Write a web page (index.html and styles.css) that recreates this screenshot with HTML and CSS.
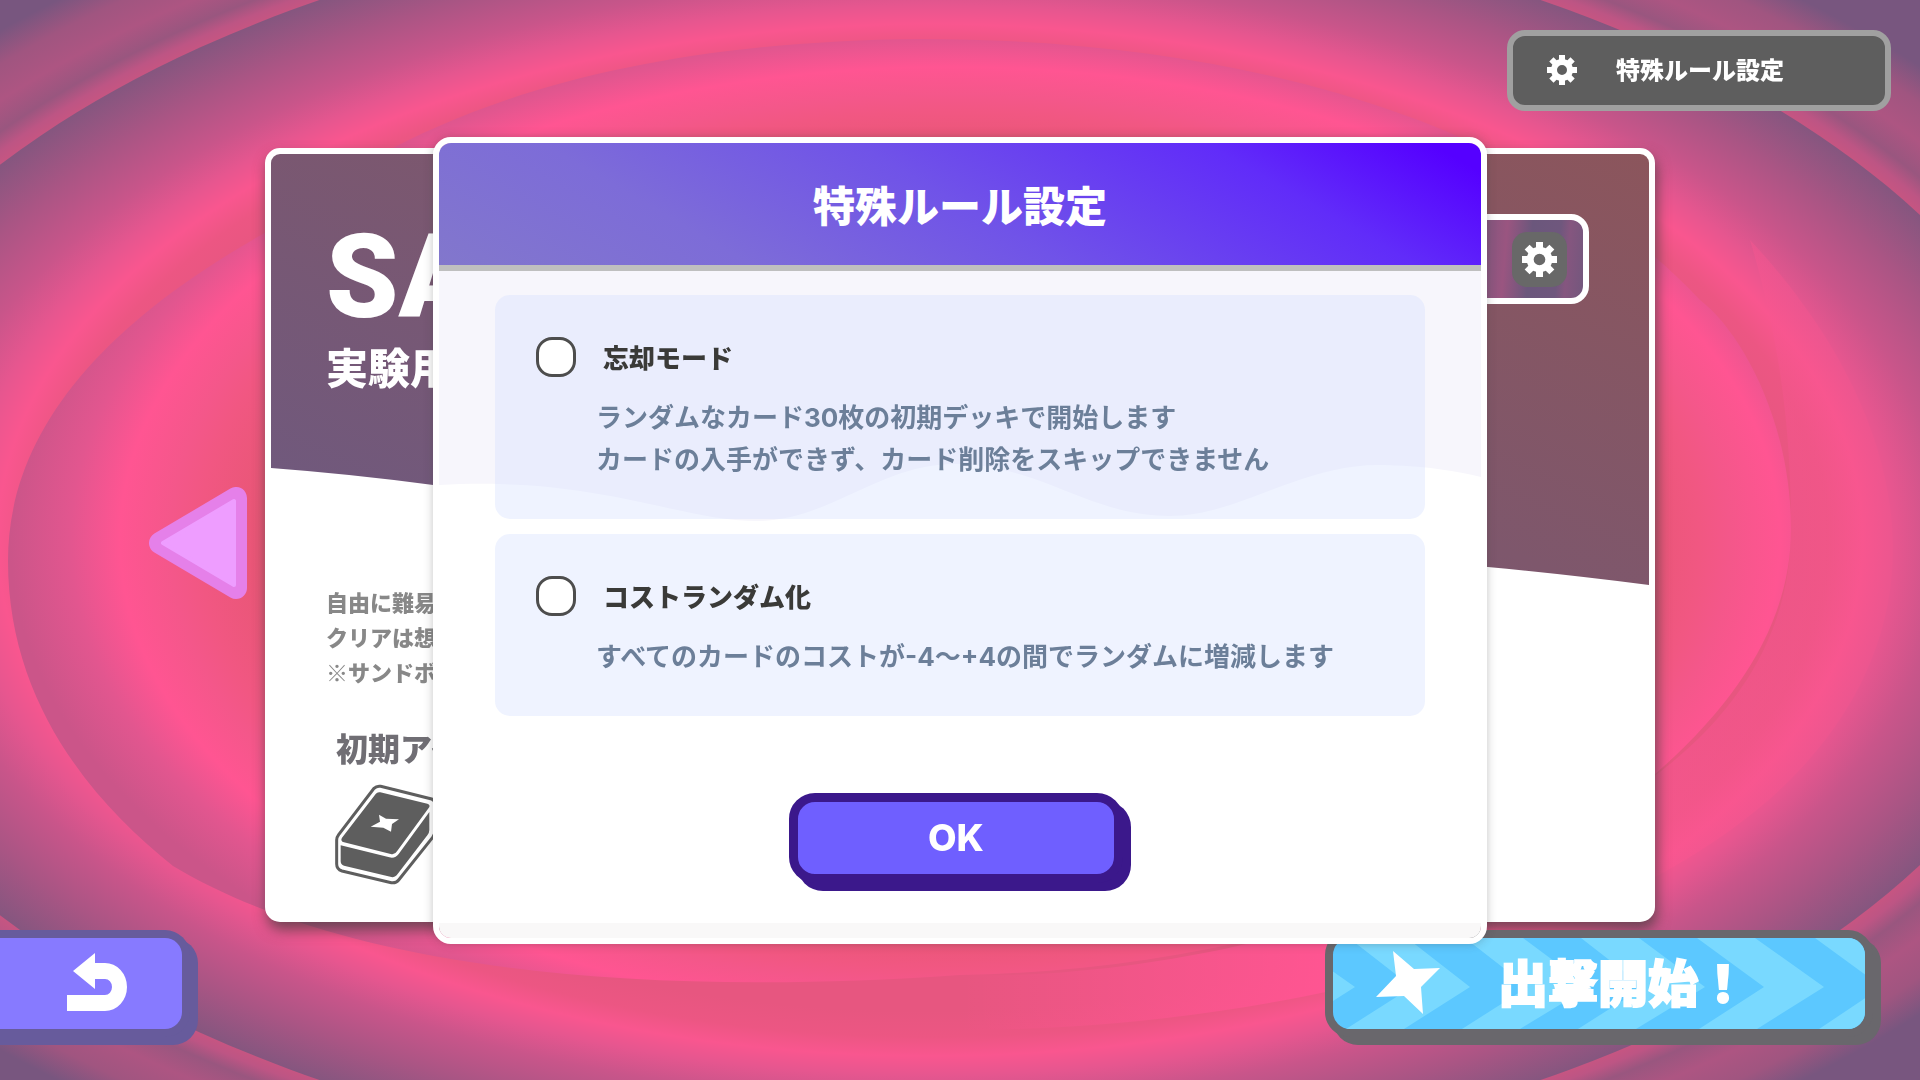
FILE: index.html
```html
<!DOCTYPE html>
<html lang="ja">
<head>
    <meta charset="UTF-8">
    <meta name="viewport" content="width=device-width, initial-scale=1.0">
    <title>特殊ルール設定</title>
    <link rel="stylesheet" href="styles.css">
</head>
<body>
    <!-- shared icons -->
    <svg class="defs" width="0" height="0" aria-hidden="true">
        <symbol id="gear" viewBox="-15 -15 30 30">
            <circle r="8" fill="none" stroke="currentColor" stroke-width="6"/>
            <g fill="currentColor">
                <path d="M-3-15H3V-9H-3ZM-3 9H3V15H-3ZM-15-3H-9V3H-15ZM9-3H15V3H9Z"/>
                <path transform="rotate(45)" d="M-3-15H3V-9H-3ZM-3 9H3V15H-3ZM-15-3H-9V3H-15ZM9-3H15V3H9Z"/>
            </g>
        </symbol>
    </svg>

    <svg class="swirl" viewBox="0 0 1920 1080" preserveAspectRatio="none" aria-hidden="true">
        <defs>
            <radialGradient id="outer" gradientUnits="userSpaceOnUse" cx="0" cy="0" r="1" gradientTransform="translate(930 540) scale(1439 796)">
                <stop offset=".79" stop-color="#cf557f"/>
                <stop offset=".81" stop-color="#bd5584"/>
                <stop offset=".825" stop-color="#99567f"/>
                <stop offset=".85" stop-color="#ad5582"/>
                <stop offset=".88" stop-color="#a05580"/>
                <stop offset=".91" stop-color="#78567f"/>
            </radialGradient>
            <radialGradient id="middle" gradientUnits="userSpaceOnUse" cx="0" cy="0" r="1" gradientTransform="translate(930 540) scale(1151 637)">
                <stop offset=".74" stop-color="#e75680"/>
                <stop offset=".78" stop-color="#ec5683"/>
                <stop offset=".81" stop-color="#f9568f"/>
                <stop offset=".84" stop-color="#e6568f"/>
                <stop offset=".88" stop-color="#c9558a"/>
                <stop offset=".94" stop-color="#a95584"/>
                <stop offset="1" stop-color="#85567f"/>
            </radialGradient>
            <radialGradient id="inner" gradientUnits="userSpaceOnUse" cx="0" cy="0" r="1" gradientTransform="translate(950 540) scale(1000 570)">
                <stop offset=".68" stop-color="#e75674"/>
                <stop offset=".75" stop-color="#f15782"/>
                <stop offset=".78" stop-color="#f4578a"/>
                <stop offset=".83" stop-color="#ff5592"/>
                <stop offset=".88" stop-color="#e2568f"/>
                <stop offset=".94" stop-color="#cb5589"/>
            </radialGradient>
            <linearGradient id="glow" x1="0" y1="0" x2="1" y2="0">
                <stop offset="0" stop-color="#ff5592" stop-opacity="0"/>
                <stop offset=".4" stop-color="#ff5592"/>
                <stop offset="1" stop-color="#f4568f" stop-opacity=".3"/>
            </linearGradient>
        </defs>
        <rect width="1920" height="1080" fill="url(#outer)"/>
        <ellipse cx="930" cy="540" rx="1151" ry="637" fill="url(#middle)"/>
        <path d="M1791 529C1791 640 1730 730 1620 800C1400 925 1150 980 960 975L960 1030C1300 1030 1640 930 1790 780C1960 610 1900 400 1750 240C1780 340 1791 430 1791 529Z" fill="url(#glow)"/>
        <path d="M8 561C8 700 90 800 173 866C330 960 600 1000 960 975C1240 970 1480 885 1654 775C1740 700 1791 620 1791 529C1791 420 1740 330 1700 300C1540 130 1260 39 920 39C600 42 400 120 270 230C90 330 8 440 8 561Z" fill="url(#inner)"/>
    </svg>

    <main class="scene">
        <header class="topbar">
            <button class="rule-button" type="button">
                <svg width="30" height="30" aria-hidden="true"><use href="#gear"/></svg>
                <span>特殊ルール設定</span>
            </button>
        </header>

        <section class="stage">
            <button class="prev" type="button" aria-label="前へ">
                <svg viewBox="0 0 98 112" width="98" height="112" aria-hidden="true">
                    <path d="M11 56L87 11V101Z" fill="#e580e9" stroke="#e580e9" stroke-width="22" stroke-linejoin="round"/>
                    <path d="M14 56L85 14V98Z" fill="#ee9dff" stroke="#ee9dff" stroke-width="4" stroke-linejoin="round"/>
                </svg>
            </button>
            <article class="card">
                <svg class="card-wave" viewBox="0 0 1376 431" preserveAspectRatio="none" aria-hidden="true">
                    <defs>
                        <linearGradient id="dusk" gradientUnits="userSpaceOnUse" x1="1000" y1="-220" x2="620" y2="640">
                            <stop offset="0" stop-color="#8d555a"/>
                            <stop offset="1" stop-color="#6f597e"/>
                        </linearGradient>
                    </defs>
                    <path d="M0 0H1376V431Q1290 420 1215 413C800 380 600 340 162 331Q80 320 0 314Z" fill="url(#dusk)"/>
                </svg>
                <div class="card-head">
                    <div>
                        <h1>SA</h1>
                        <p class="tagline">実験用</p>
                    </div>
                    <div class="slot">
                        <button class="slot-button" type="button" aria-label="設定">
                            <svg width="35" height="35" aria-hidden="true"><use href="#gear"/></svg>
                        </button>
                    </div>
                </div>
                <p class="card-text">自由に難易<br>クリアは想<br>※サンドボ</p>
                <h2>初期アイ</h2>
                <svg class="deck" viewBox="255 672 306 303" width="102" height="101" aria-hidden="true">
                    <path d="M372 685Q380 677 392 679L545 717Q556 721 556 732V810Q556 822 548 832L446 960Q438 970 424 968L276 933Q260 928 260 912V840Q260 832 266 824Z" fill="#fff" stroke="#5e5e5e" stroke-width="9"/>
                    <path d="M377 702Q382 695 391 697L532 731Q543 735 536 744L441 874Q435 885 422 882L282 847Q270 843 276 833Z" fill="#5e5e5e"/>
                    <path d="M272 856L418 892Q436 896 446 882L538 756V810Q538 818 532 826L440 946Q434 953 424 951L282 917Q272 914 272 904Z" fill="#5e5e5e"/>
                    <path d="M362 800L390 785L387 764L408 776L447 778L426 792L423 815L400 803Z" fill="#fff"/>
                </svg>
            </article>
        </section>

        <footer class="bottombar">
            <button class="back" type="button" aria-label="戻る">
                <svg viewBox="0 0 60 58" width="60" height="58" aria-hidden="true">
                    <path d="M6 18L28 0V10H38A22 24 0 0 1 38 58H0V42H38A7 8 0 0 0 38 26H28V36Z" fill="#fff"/>
                </svg>
            </button>
            <button class="start" type="button">
                <svg class="chevrons" viewBox="0 0 532 91" preserveAspectRatio="xMidYMid slice" aria-hidden="true">
                    <g fill="#79d9ff">
                        <path d="M-105 0h58L22 49L-44 91h-58L-36 49Z"/>
                        <path d="M16 0h58L137 49L71 91h-58L79 49Z"/>
                        <path d="M132 0h58L256 49L187 91h-58L195 49Z"/>
                        <path d="M248 0h58L372 49L303 91h-58L311 49Z"/>
                        <path d="M364 0h58L491 49L424 91h-58L431 49Z"/>
                        <path d="M482 0h58V91h-54L549 49Z"/>
                    </g>
                </svg>
                <svg class="star" viewBox="76 54 64 63" width="64" height="63" aria-hidden="true">
                    <path d="M93 54L114 72L140 71L121 90L123 117L104 99L76 100L96 79Z" fill="#fff"/>
                </svg>
                <span>出撃開始！</span>
            </button>
        </footer>
    </main>

    <div class="overlay">
        <form class="modal" role="dialog" aria-labelledby="modalTitle">
            <h2 class="modal-title" id="modalTitle">特殊ルール設定</h2>
            <div class="modal-body">
                <svg class="modal-wave" viewBox="0 0 1042 252" preserveAspectRatio="none" aria-hidden="true">
                    <path d="M0 0H1042V206C1010 198 970 194 939 194C860 194 800 245 730 245C650 245 600 193 516 193C440 193 390 250 318 250C240 250 160 205 0 214Z" fill="#f7f6fc"/>
                </svg>
                <div class="option">
                    <div class="option-head">
                        <input type="checkbox" id="forget">
                        <label for="forget">忘却モード</label>
                    </div>
                    <p>ランダムなカード30枚の初期デッキで開始します<br>カードの入手ができず、カード削除をスキップできません</p>
                </div>
                <div class="option">
                    <div class="option-head">
                        <input type="checkbox" id="randomCost">
                        <label for="randomCost">コストランダム化</label>
                    </div>
                    <p>すべてのカードのコストが-4〜+4の間でランダムに増減します</p>
                </div>
                <button class="ok" type="button">OK</button>
            </div>
        </form>
    </div>
</body>
</html>
```
FILE: styles.css
```css
* {
    box-sizing: border-box;
}

body {
    margin: 0;
    font-family: "Noto Sans CJK JP", sans-serif;
    font-weight: 900;
    color: #ffffff;
    background-color: #78567f;
}

h1, h2, p {
    margin: 0;
}

button {
    font: inherit;
    color: inherit;
    padding: 0;
    border: none;
    background: none;
    cursor: pointer;
}

svg {
    display: block;
}

.defs {
    position: absolute;
}

.swirl {
    position: fixed;
    top: 0;
    left: 0;
    width: 100%;
    height: 100%;
}

.scene {
    position: relative;
    min-height: 100vh;
    display: grid;
    grid-template-rows: auto 1fr auto;
    padding: 30px 0 43px;
}

/* Top bar */
.topbar {
    display: flex;
    justify-content: flex-end;
    padding-right: 29px;
    margin-bottom: 37px;
}

.rule-button {
    display: flex;
    align-items: center;
    gap: 39px;
    width: 384px;
    height: 81px;
    padding: 0 0 1px 34px;
    font-size: 24px;
    line-height: 36px;
    background-color: #5e5e5e;
    border: 6px solid #a0a0a0;
    border-radius: 18px;
}

.rule-button span {
    padding-bottom: 2px;
}

/* Stage card */
.stage {
    display: grid;
    grid-template-columns: 1fr 72.4% 1fr;
    margin-bottom: 8px;
}

.prev {
    align-self: center;
    justify-self: end;
    margin: 16px 18px 0 0;
}

.card {
    position: relative;
    padding: 60px 60px 30px 55px;
    background-color: #ffffff;
    border: 6px solid #ffffff;
    border-radius: 15px;
    box-shadow: 2px 8px 14px rgba(60, 60, 60, 0.7);
}

.card-wave {
    position: absolute;
    top: 0;
    left: 0;
    width: 100%;
    height: 431px;
    border-radius: 9px 9px 0 0;
}

.card-head {
    position: relative;
    display: flex;
    justify-content: space-between;
    align-items: flex-start;
}

h1 {
    margin-top: 15px;
    font-family: Roboto, sans-serif;
    font-size: 116px;
    font-weight: 900;
    line-height: 96px;
}

.tagline {
    margin-top: 13px;
    font-size: 42px;
    line-height: 56px;
}

.slot {
    display: flex;
    justify-content: flex-end;
    align-items: center;
    width: 320px;
    height: 90px;
    padding-right: 16px;
    border: 6px solid #ffffff;
    border-radius: 18px;
    background: linear-gradient(95deg, #6b577c 60%, #9a5580 74%, #6b577c 82%, #6f577d 91%, #85567f 94%, #73577d);
}

.slot-button {
    display: flex;
    justify-content: center;
    align-items: center;
    width: 55px;
    height: 55px;
    background-color: #686868;
    border-radius: 15px;
}

.card-text {
    margin-top: 190px;
    font-size: 22px;
    line-height: 35px;
    color: #888888;
}

.card h2 {
    margin: 38px 0 17px 10px;
    font-size: 32px;
    font-weight: 900;
    line-height: 40px;
    color: #706e74;
}

.deck {
    margin-left: 9px;
}

/* Bottom bar */
.bottombar {
    display: flex;
    justify-content: space-between;
    padding-right: 47px;
}

.back {
    display: flex;
    justify-content: flex-end;
    align-items: center;
    width: 190px;
    height: 107px;
    padding: 0 55px 4px 0;
    background-color: #877aff;
    border: 8px solid #675b9c;
    border-left: none;
    border-radius: 0 25px 25px 0;
    box-shadow: 8px 8px 0 #675b9c, 0 8px 0 #675b9c;
}

.start {
    position: relative;
    display: flex;
    align-items: center;
    gap: 58px;
    width: 548px;
    height: 107px;
    padding: 0 0 2px 43px;
    overflow: hidden;
    font-size: 50px;
    line-height: 60px;
    -webkit-text-stroke: 2px #ffffff;
    background-color: #5cc8ff;
    border: 8px solid #69676c;
    border-radius: 25px;
    box-shadow: 8px 8px 0 #69676c;
}

.chevrons {
    position: absolute;
    top: 0;
    left: 0;
    width: 100%;
    height: 100%;
}

.star, .start span {
    position: relative;
}

.start span {
    padding-bottom: 6px;
}

/* Modal */
.overlay {
    position: fixed;
    top: 0;
    left: 0;
    width: 100%;
    height: 100%;
    display: flex;
    justify-content: center;
    align-items: center;
}

.modal {
    width: 54.9%;
    overflow: hidden;
    border: 6px solid #ffffff;
    border-radius: 18px;
    background: linear-gradient(to top, #f9f8f8 15px, #ffffff 15px) padding-box;
    box-shadow: 0 0 10px rgba(60, 60, 60, 0.3);
}

.modal-title {
    padding: 31px 0;
    text-align: center;
    font-size: 42px;
    font-weight: 900;
    line-height: 60px;
    background: linear-gradient(30deg, #8277cc, #7d6cd8 25%, #7053e8 50%, #612cf9 78%, #5500ff 96%);
    border-bottom: 6px solid #bfbfbf;
}

.modal-body {
    position: relative;
    display: flex;
    flex-direction: column;
    gap: 15px;
    padding: 24px 56px 55px;
}

.modal-wave {
    position: absolute;
    top: 0;
    left: 0;
    width: 100%;
    height: 252px;
}

.option {
    position: relative;
    padding: 42px 41px 38px;
    border-radius: 15px;
    background-color: rgba(214, 225, 255, 0.4);
}

.option-head {
    display: flex;
    align-items: center;
    gap: 27px;
    margin-bottom: 20px;
}

.option input {
    appearance: none;
    width: 40px;
    height: 40px;
    margin: 0;
    background-color: #ffffff;
    border: 3px solid #4d4d4d;
    border-radius: 16px;
}

.option input:checked {
    background-color: #6f5fff;
}

.option label {
    font-size: 26px;
    line-height: 40px;
    color: #3a3a38;
}

.option p {
    padding-left: 60px;
    font-family: Inter, "Noto Sans CJK JP", sans-serif;
    font-size: 26px;
    font-weight: 700;
    line-height: 42px;
    color: #6c7f99;
}

.ok {
    position: relative;
    align-self: center;
    width: 334px;
    height: 90px;
    margin: 62px 8px 0 0;
    font-family: Inter, sans-serif;
    font-size: 37px;
    font-weight: 800;
    background-color: #6f5fff;
    border: 9px solid #3b188b;
    border-radius: 26px;
    box-shadow: 8px 8px 0 #3b188b;
}
```
